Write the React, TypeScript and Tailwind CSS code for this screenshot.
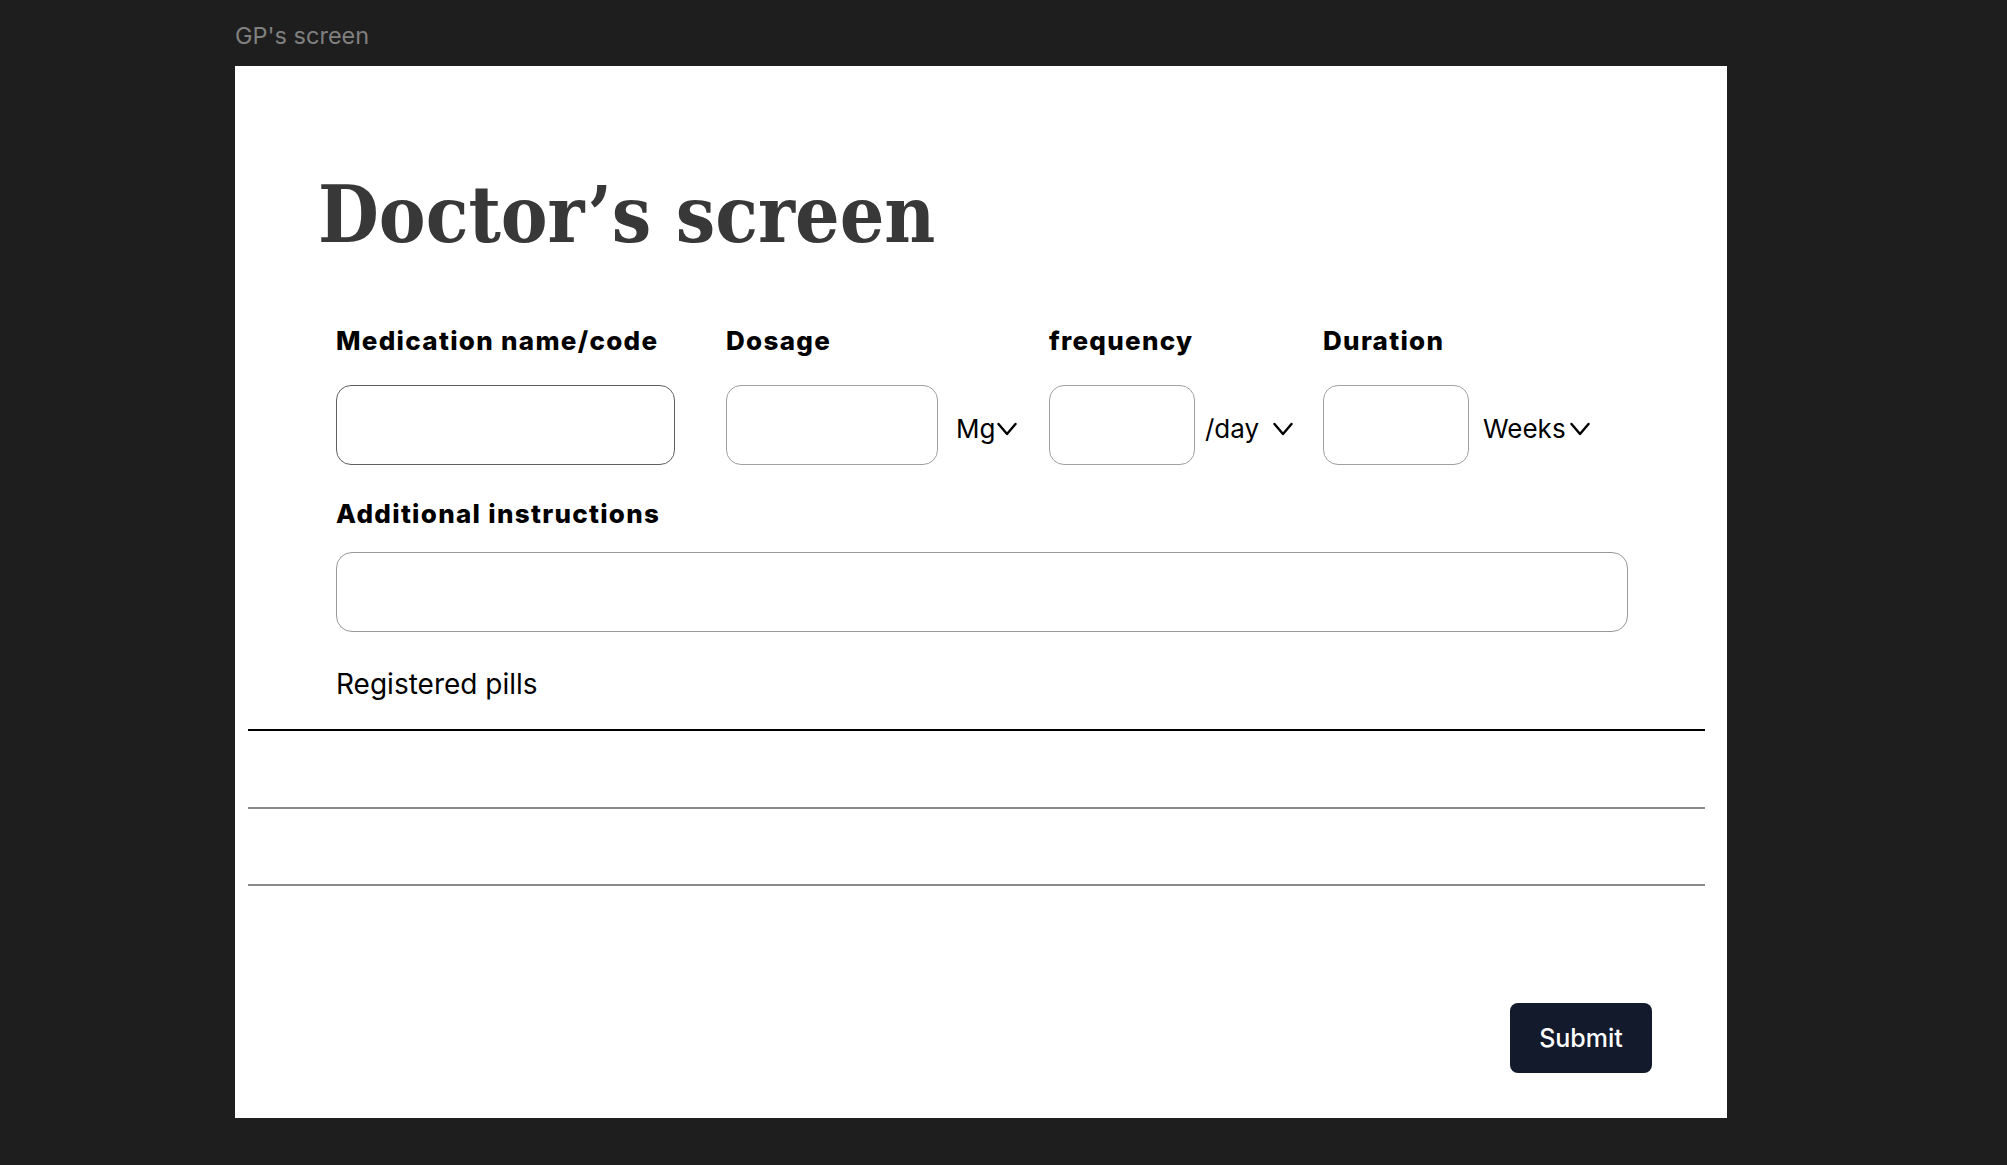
import React from "react";

function Chevron({ className = "" }: { className?: string }) {
  return (
    <svg
      width="20"
      height="14"
      viewBox="0 0 20 14"
      fill="none"
      className={className}
    >
      <polyline
        points="1.5,2 10,12 18.5,2"
        stroke="#000"
        strokeWidth="2.4"
        strokeLinecap="round"
        strokeLinejoin="round"
      />
    </svg>
  );
}

function Label({ children }: { children: React.ReactNode }) {
  return (
    <div className="text-[26px] leading-[30px] font-extrabold tracking-[0.05em] text-black whitespace-nowrap">
      {children}
    </div>
  );
}

function Unit({ text, gap }: { text: string; gap: string }) {
  return (
    <div className="flex items-center pt-[8px] text-[26px] leading-[32px] text-black whitespace-nowrap">
      <span>{text}</span>
      <Chevron className={gap} />
    </div>
  );
}

export default function App() {
  return (
    <div className="w-full min-h-[1165px] bg-[#1e1e1e] [font-family:Inter,'Liberation_Sans',sans-serif] pt-[21px]">
      <div className="ml-[235px] h-[29px] text-[23.5px] leading-[29px] text-[#808080]">
        GP's screen
      </div>
      <div className="ml-[235px] mt-[16px] w-[1492px] h-[1052px] bg-white flex flex-col">
        <h1 className="mt-[110px] ml-[83px] h-[78px] text-[78px] leading-[78px] font-bold text-[#383838] [font-family:'DejaVu_Serif_Condensed','DejaVu_Serif',serif] [font-stretch:condensed]">
          Doctor’s screen
        </h1>

        <div className="mt-[72px] ml-[101px] flex">
          <div className="w-[390px] flex flex-col gap-[29px]">
            <Label>Medication name/code</Label>
            <div className="w-[339px] h-[80px] rounded-[15px] border-[1.5px] border-[#5f5f5f]" />
          </div>
          <div className="w-[323px] flex flex-col gap-[29px]">
            <Label>Dosage</Label>
            <div className="flex items-center">
              <div className="w-[212px] h-[80px] rounded-[15px] border-[1.5px] border-[#a0a0a0]" />
              <div className="ml-[18px]">
                <Unit text="Mg" gap="ml-[2px]" />
              </div>
            </div>
          </div>
          <div className="w-[274px] flex flex-col gap-[29px]">
            <Label>frequency</Label>
            <div className="flex items-center">
              <div className="w-[146px] h-[80px] rounded-[15px] border-[1.5px] border-[#a0a0a0]" />
              <div className="ml-[10px]">
                <Unit text="/day" gap="ml-[14px]" />
              </div>
            </div>
          </div>
          <div className="flex flex-col gap-[29px]">
            <Label>Duration</Label>
            <div className="flex items-center">
              <div className="w-[146px] h-[80px] rounded-[15px] border-[1.5px] border-[#a0a0a0]" />
              <div className="ml-[14px]">
                <Unit text="Weeks" gap="ml-[4px]" />
              </div>
            </div>
          </div>
        </div>

        <div className="mt-[34px] ml-[101px]">
          <Label>Additional instructions</Label>
        </div>
        <div className="mt-[23px] ml-[101px] w-[1292px] h-[80px] rounded-[16px] border-[1.5px] border-[#999999]" />

        <div className="mt-[35px] ml-[101px] text-[28px] leading-[34px] text-black">
          Registered pills
        </div>

        <div className="mt-[28px] ml-[13px] w-[1457px] flex flex-col">
          <div className="h-[2px] bg-black" />
          <div className="h-[76px]" />
          <div className="h-[2px] bg-[#8a8a8a]" />
          <div className="h-[75px]" />
          <div className="h-[2px] bg-[#8a8a8a]" />
        </div>

        <div className="mt-auto mb-[45px] mr-[75px] flex justify-end">
          <button className="w-[142px] h-[70px] rounded-[8px] bg-[#131a2c] text-white text-[25px] leading-[30px] font-medium">
            Submit
          </button>
        </div>
      </div>
    </div>
  );
}
